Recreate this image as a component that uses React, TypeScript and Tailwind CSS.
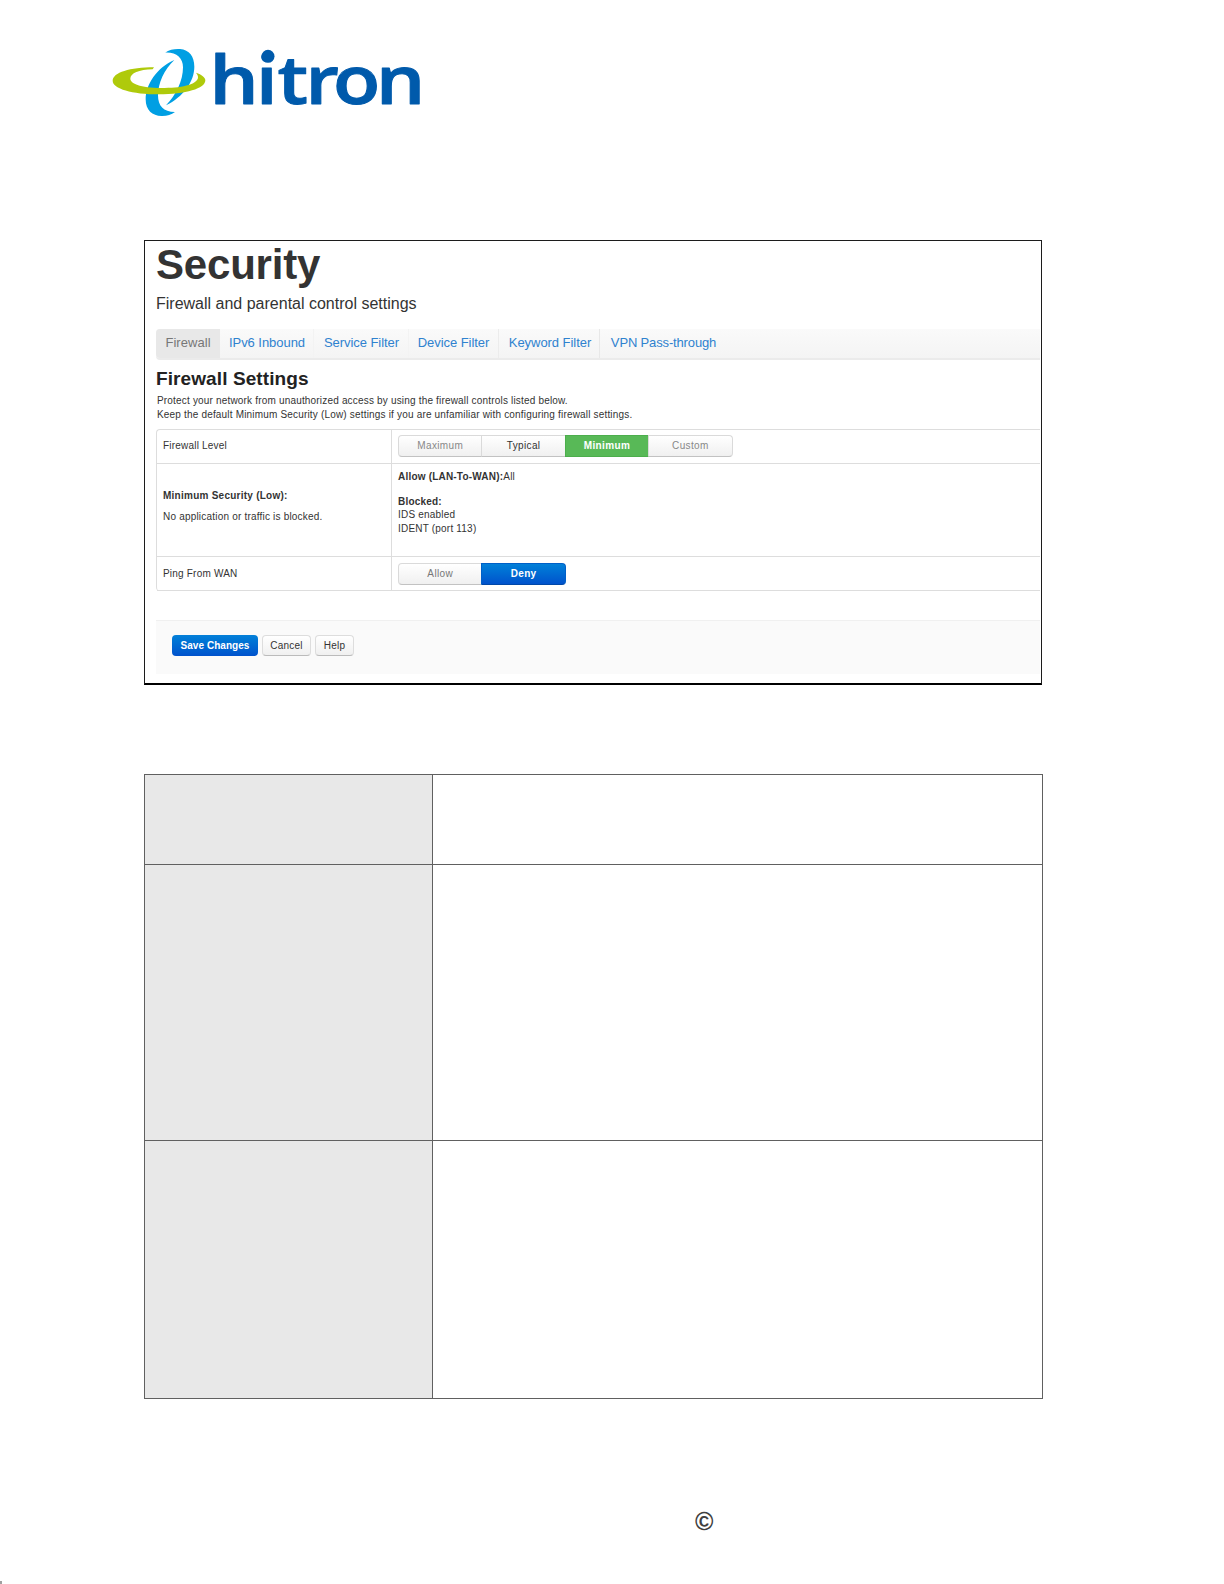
import type { ReactNode } from 'react';

interface Tab {
  label: string;
  cell: string;
}

const TABS: Tab[] = [
  { label: 'Firewall', cell: 'w-[64px] bg-[#e8e8e8] text-[#777777] rounded-l tracking-[0.05px]' },
  { label: 'IPv6 Inbound', cell: 'w-[94px] border-r border-[#f3f3f3] tracking-[-0.05px] pl-px' },
  { label: 'Service Filter', cell: 'w-[95px] border-r border-[#f3f3f3] tracking-[-0.05px] pl-px' },
  { label: 'Device Filter', cell: 'w-[90px] border-r border-[#ececec] tracking-[-0.05px]' },
  { label: 'Keyword Filter', cell: 'w-[101px] border-r border-[#e8e8e8] tracking-[-0.05px] pl-0.5' },
  { label: 'VPN Pass-through', cell: 'w-[126px] tracking-[-0.15px] pl-px' },
];

const LEVELS = [
  { label: 'Maximum', style: 'rounded-l text-[#888888]' },
  { label: 'Typical', style: 'text-[#333333]' },
  { label: 'Minimum', style: 'bg-[#58b957] bg-none border-[#4cae4c] text-white font-bold' },
  { label: 'Custom', style: 'rounded-r text-[#888888]' },
];

const INFO_ROWS = ['h-[90px]', 'h-[276px]', 'h-[258px]'];

function Logo() {
  return (
    <svg className="block h-[90px] w-[340px] overflow-visible" viewBox="0 0 1020 270">
      <path
        fill="#009fe3"
        d="M195 50C208 41 224 38 240 39C268 41 283 62 283 92C283 137 250 182 198 208C228 178 249 134 249 94C249 66 229 48 195 50Z"
      />
      <path
        fill="#009fe3"
        d="M223 72C170 95 137 146 137 190C137 224 158 241 187 240C202 240 214 236 225 228C190 228 174 210 174 178C174 141 193 100 223 72Z"
      />
      <path
        fill="#afca0b"
        d="M162 94C90 94 38 110 38 134C38 158 97 175 176 175C257 175 316 158 316 133C316 124 305 116 288 110C292 115 294 119 294 124C294 143 253 156 194 156C132 156 91 146 91 128C91 112 117 101 158 100Z"
      />
      <text
        transform="scale(1.15 1)"
        x="286 407 463 536 608 720"
        y="204"
        fill="#005aab"
        stroke="#005aab"
        strokeWidth="3"
        strokeLinejoin="round"
        fontSize="202"
        fontWeight="600"
        fontFamily="'Open Sans', 'Noto Sans', sans-serif"
      >
        hitron
      </text>
      <circle cx="504" cy="61" r="19.5" fill="#005aab" />
    </svg>
  );
}

function Segment({ children, className }: { children: ReactNode; className: string }) {
  return (
    <button
      className={`h-[22px] w-[84.4px] -mr-px border text-center text-[10px] leading-[20px] tracking-[0.35px] ${className}`}
    >
      {children}
    </button>
  );
}

const SEGMENT_LIGHT = 'border-[#dadada] border-b-[#c2c2c2] bg-linear-to-b from-white to-[#f0f0f0]';

function FirewallPanel() {
  return (
    <section className="mt-[114px] ml-36 h-[445px] w-[898px] overflow-hidden border border-b-2 border-[#1c1c1c] border-b-black pl-[11px] pr-px text-[#333333]">
      <h1 className="h-[48px] text-[42px] leading-[47px] font-bold tracking-[-0.2px] whitespace-nowrap">Security</h1>
      <p className="mt-1 h-[21px] text-[16px] leading-[21px] whitespace-nowrap">Firewall and parental control settings</p>

      <nav className="mt-[15px] flex h-[31px] rounded-l border-b-2 border-[#ebebeb] bg-linear-to-b from-[#fafafa] to-[#f4f4f4] text-[13px] leading-[28px] text-[#2f82cf]">
        {TABS.map((tab) => (
          <a key={tab.label} className={`text-center whitespace-nowrap ${tab.cell}`}>
            {tab.label}
          </a>
        ))}
      </nav>

      <h2 className="mt-[8px] h-[22px] text-[19px] leading-[22px] font-bold tracking-[0.1px] text-[#222222]">
        Firewall Settings
      </h2>
      <div className="mt-1 h-[35px] pl-px text-[10px] leading-[14px] tracking-[0.18px] whitespace-nowrap">
        <p>Protect your network from unauthorized access by using the firewall controls listed below.</p>
        <p>Keep the default Minimum Security (Low) settings if you are unfamiliar with configuring firewall settings.</p>
      </div>

      <div className="grid h-[162px] grid-cols-[234px_1fr] grid-rows-[34px_93px_34px] rounded-l border-t border-l border-[#dddddd] text-[10px] tracking-[0.2px]">
        <div className="border-b border-[#dddddd] pl-[6px] leading-[32px]">Firewall Level</div>
        <div className="flex border-b border-l border-[#dddddd] pt-[5px] pl-[6px]">
          {LEVELS.map((level) => (
            <Segment
              key={level.label}
              className={level.label === 'Minimum' ? level.style : `${SEGMENT_LIGHT} ${level.style}`}
            >
              {level.label}
            </Segment>
          ))}
        </div>
        <div className="border-b border-[#dddddd] pt-[25px] pl-[6px] leading-[14px]">
          <p className="font-bold tracking-[0.25px]">Minimum Security (Low):</p>
          <p className="mt-[7px]">No application or traffic is blocked.</p>
        </div>
        <div className="border-b border-l border-[#dddddd] pt-[6px] pl-[6px] leading-[14px]">
          <p>
            <b>Allow (LAN-To-WAN):</b>All
          </p>
          <p className="mt-[11px] font-bold">Blocked:</p>
          <p className="-mt-px">IDS enabled</p>
          <p>IDENT (port 113)</p>
        </div>
        <div className="border-b border-[#dddddd] pl-[6px] leading-[34px]">Ping From WAN</div>
        <div className="flex border-b border-l border-[#dddddd] pt-[6px] pl-[6px]">
          <Segment className={`rounded-l text-[#777777] ${SEGMENT_LIGHT}`}>Allow</Segment>
          <Segment className="rounded-r border-[#0060c8] border-b-[#0048a8] bg-linear-to-b from-[#0480d8] to-[#0052cc] font-bold text-white">
            Deny
          </Segment>
        </div>
      </div>

      <footer className="mt-[29px] flex h-[54px] gap-1 border-t border-[#f0f0f0] bg-[#fafafa] pt-[14px] pl-4 text-[10px] leading-[20px] tracking-[0.2px]">
        <button className="h-[21px] w-[86px] rounded-sm bg-linear-to-b from-[#0480d8] to-[#0052cc] font-bold tracking-[0.05px] text-white">
          Save Changes
        </button>
        <button className="h-[21px] w-[49px] rounded-sm border border-[#dddddd] border-b-[#bbbbbb] bg-linear-to-b from-white to-[#f0f0f0] leading-[18px]">
          Cancel
        </button>
        <button className="h-[21px] w-[39px] rounded-sm border border-[#dddddd] border-b-[#bbbbbb] bg-linear-to-b from-white to-[#f0f0f0] leading-[18px]">
          Help
        </button>
      </footer>
    </section>
  );
}

export default function App() {
  return (
    <main className="h-[1584px] w-[1224px] overflow-hidden bg-white font-['Liberation_Sans',Arial,sans-serif]">
      <header className="pt-9 pl-[100px]">
        <Logo />
      </header>

      <FirewallPanel />

      <div className="mt-[89px] ml-36 w-[899px] border-t border-l border-[#606060]">
        {INFO_ROWS.map((height) => (
          <div key={height} className={`flex border-b border-[#606060] ${height}`}>
            <div className="w-[288px] border-r border-[#606060] bg-[#e8e8e8]" />
            <div className="flex-1 border-r border-[#606060]" />
          </div>
        ))}
      </div>

      <p className="mt-[106px] pl-[695px] text-[25px] leading-[32px] font-bold text-[#404040]">©</p>
      <div className="mt-[44px] h-[3px] w-[2px] bg-[#a0a0a0]" />
    </main>
  );
}
